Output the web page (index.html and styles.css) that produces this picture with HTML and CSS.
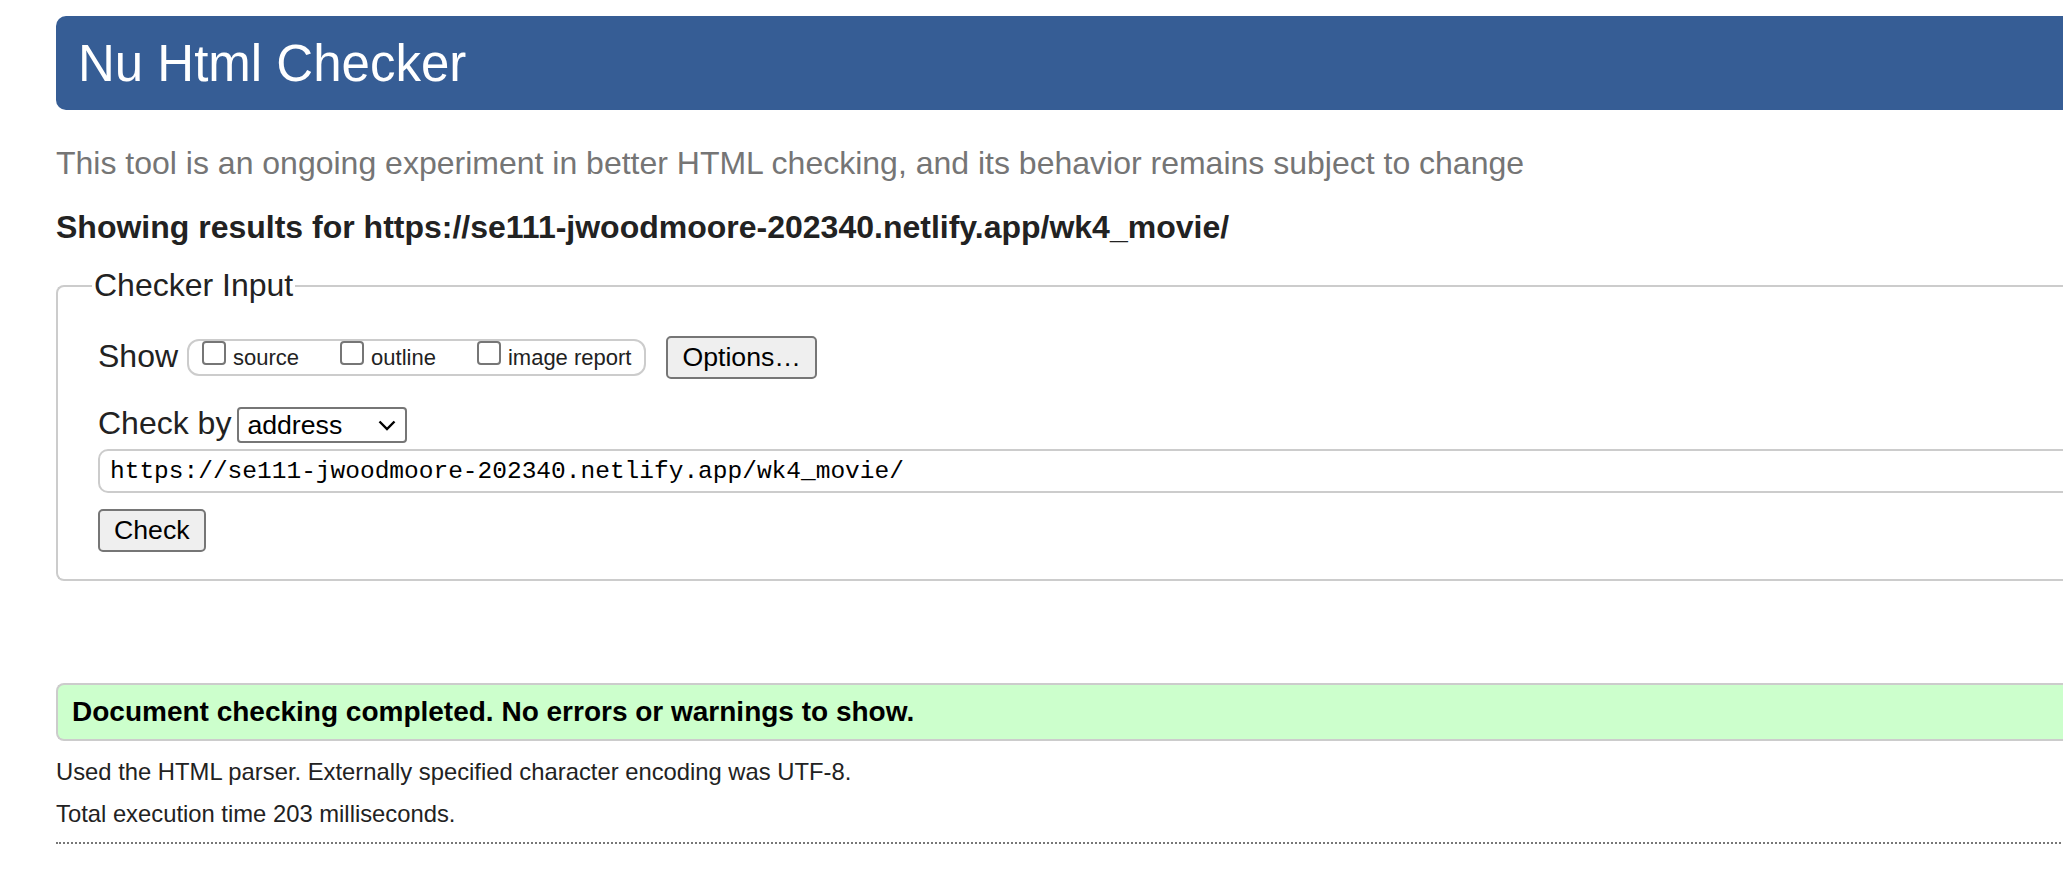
FILE: index.html
```html
<!DOCTYPE html>
<html lang="en">
<head>
<meta charset="utf-8">
<title>Nu Html Checker</title>
<link rel="stylesheet" href="styles.css">
</head>
<body>
<div class="page">
  <h1 class="masthead">Nu Html Checker</h1>
  <p class="subtitle">This tool is an ongoing experiment in better HTML checking, and its behavior remains subject to change</p>
  <p class="results-for">Showing results for https://se111-jwoodmoore-202340.netlify.app/wk4_movie/</p>
  <form class="checker">
    <fieldset class="checker-input">
      <legend>Checker Input</legend>
      <div class="row row-show">
        <span class="row-label row-label-show">Show</span>
        <div class="show-options">
          <label class="opt"><input type="checkbox" class="box"><span>source</span></label>
          <label class="opt"><input type="checkbox" class="box"><span>outline</span></label>
          <label class="opt"><input type="checkbox" class="box"><span>image report</span></label>
        </div>
        <button type="button" class="btn btn-options">Options…</button>
      </div>
      <div class="row row-by">
        <span class="row-label">Check by</span>
        <div class="select-wrap">
          <select class="select"><option>address</option></select>
          <svg class="chevron" width="18" height="11" viewBox="0 0 18 11"><path d="M1.5 1.5 L9 9 L16.5 1.5" fill="none" stroke="#000" stroke-width="2.4"/></svg>
        </div>
      </div>
      <input class="url" type="text" value="https://se111-jwoodmoore-202340.netlify.app/wk4_movie/">
      <button type="button" class="btn btn-check">Check</button>
    </fieldset>
  </form>
  <div class="success">Document checking completed. No errors or warnings to show.</div>
  <p class="meta meta-first">Used the HTML parser. Externally specified character encoding was UTF-8.</p>
  <p class="meta meta-second">Total execution time 203 milliseconds.</p>
  <div class="dotted"></div>
</div>
</body>
</html>
```

FILE: styles.css
```css
html, body {
  margin: 0;
  padding: 0;
  overflow: hidden;
  background: #fff;
}

body {
  font-family: "Liberation Sans", Arial, sans-serif;
  color: #222;
  font-size: 32px;
}

.page {
  width: 2200px;
  padding: 16px 0 0 56px;
}

.masthead {
  margin: 0;
  padding: 18px 24px 17px 22px;
  background: #365d95;
  color: #fff;
  font-size: 51px;
  font-weight: normal;
  line-height: normal;
  border-radius: 10px 0 0 10px;
}

.subtitle {
  margin: 35px 0 0;
  color: #757575;
  font-size: 32px;
  line-height: normal;
}

.results-for {
  margin: 27px 0 0;
  font-weight: bold;
  font-size: 32px;
  line-height: normal;
}

.checker {
  margin: 21px 0 0;
}

.checker-input {
  margin: 0;
  padding: 31px 40px 27px 40px;
  border: 2px solid #ccc;
  border-right: none;
  border-radius: 8px 0 0 8px;
  min-width: 0;
}

.checker-input legend {
  font-size: 32px;
  line-height: normal;
  padding: 0 2px;
  margin-left: -6px;
}

.row {
  display: flex;
}

.row-show {
  align-items: flex-start;
}

.row-label {
  font-size: 32px;
  line-height: normal;
}

.row-label-show {
  margin-top: 3px;
}

.show-options {
  display: flex;
  align-items: flex-start;
  margin: 4px 0 0 9px;
  padding: 0 13px 0 13px;
  border: 2px solid #ccc;
  border-radius: 12px;
  gap: 41px;
}

.opt {
  display: flex;
  align-items: flex-start;
  font-size: 22px;
  line-height: 33px;
  color: #222;
}

.box {
  appearance: none;
  -webkit-appearance: none;
  width: 24px;
  height: 24px;
  margin: 0 7px 0 0;
  border: 2px solid #767676;
  border-radius: 4px;
  background: #fff;
  box-sizing: border-box;
}

.btn {
  font-family: "Liberation Sans", Arial, sans-serif;
  font-size: 26.67px;
  line-height: normal;
  color: #000;
  background: #efefef;
  border: 2px solid #767676;
  border-radius: 5px;
  padding: 4px 14px;
}

.btn-options {
  margin: 1px 0 0 20px;
}

.row-by {
  align-items: baseline;
  margin-top: 26px;
}

.select-wrap {
  position: relative;
  margin-left: 6px;
}

.select {
  appearance: none;
  -webkit-appearance: none;
  display: block;
  width: 170px;
  height: 36px;
  box-sizing: border-box;
  padding: 0 8px;
  font-family: "Liberation Sans", Arial, sans-serif;
  font-size: 26.67px;
  color: #000;
  background: #fff;
  border: 2px solid #767676;
  border-radius: 4px;
}

.chevron {
  position: absolute;
  right: 11px;
  top: 13px;
  pointer-events: none;
}

.url {
  display: block;
  width: 100%;
  box-sizing: border-box;
  margin-top: 6px;
  height: 44px;
  padding: 0 10px;
  font-family: "Liberation Mono", "DejaVu Sans Mono", monospace;
  font-size: 24.5px;
  color: #000;
  border: 2px solid #ccc;
  border-radius: 10px;
  background: #fff;
}

.btn-check {
  display: block;
  margin-top: 16px;
  padding: 4px 14px;
}

.success {
  margin-top: 102px;
  padding: 11px 14px;
  background: #ccffcc;
  border: 2px solid #ccc;
  border-right: none;
  border-radius: 8px 0 0 8px;
  font-weight: bold;
  font-size: 28px;
  line-height: normal;
  color: #000;
}

.meta {
  margin: 0;
  font-size: 23.8px;
  line-height: normal;
  color: #222;
}

.meta-first {
  margin-top: 17px;
}

.meta-second {
  margin-top: 14px;
}

.dotted {
  margin-top: 14px;
  border-top: 2px dotted #777;
}
```
